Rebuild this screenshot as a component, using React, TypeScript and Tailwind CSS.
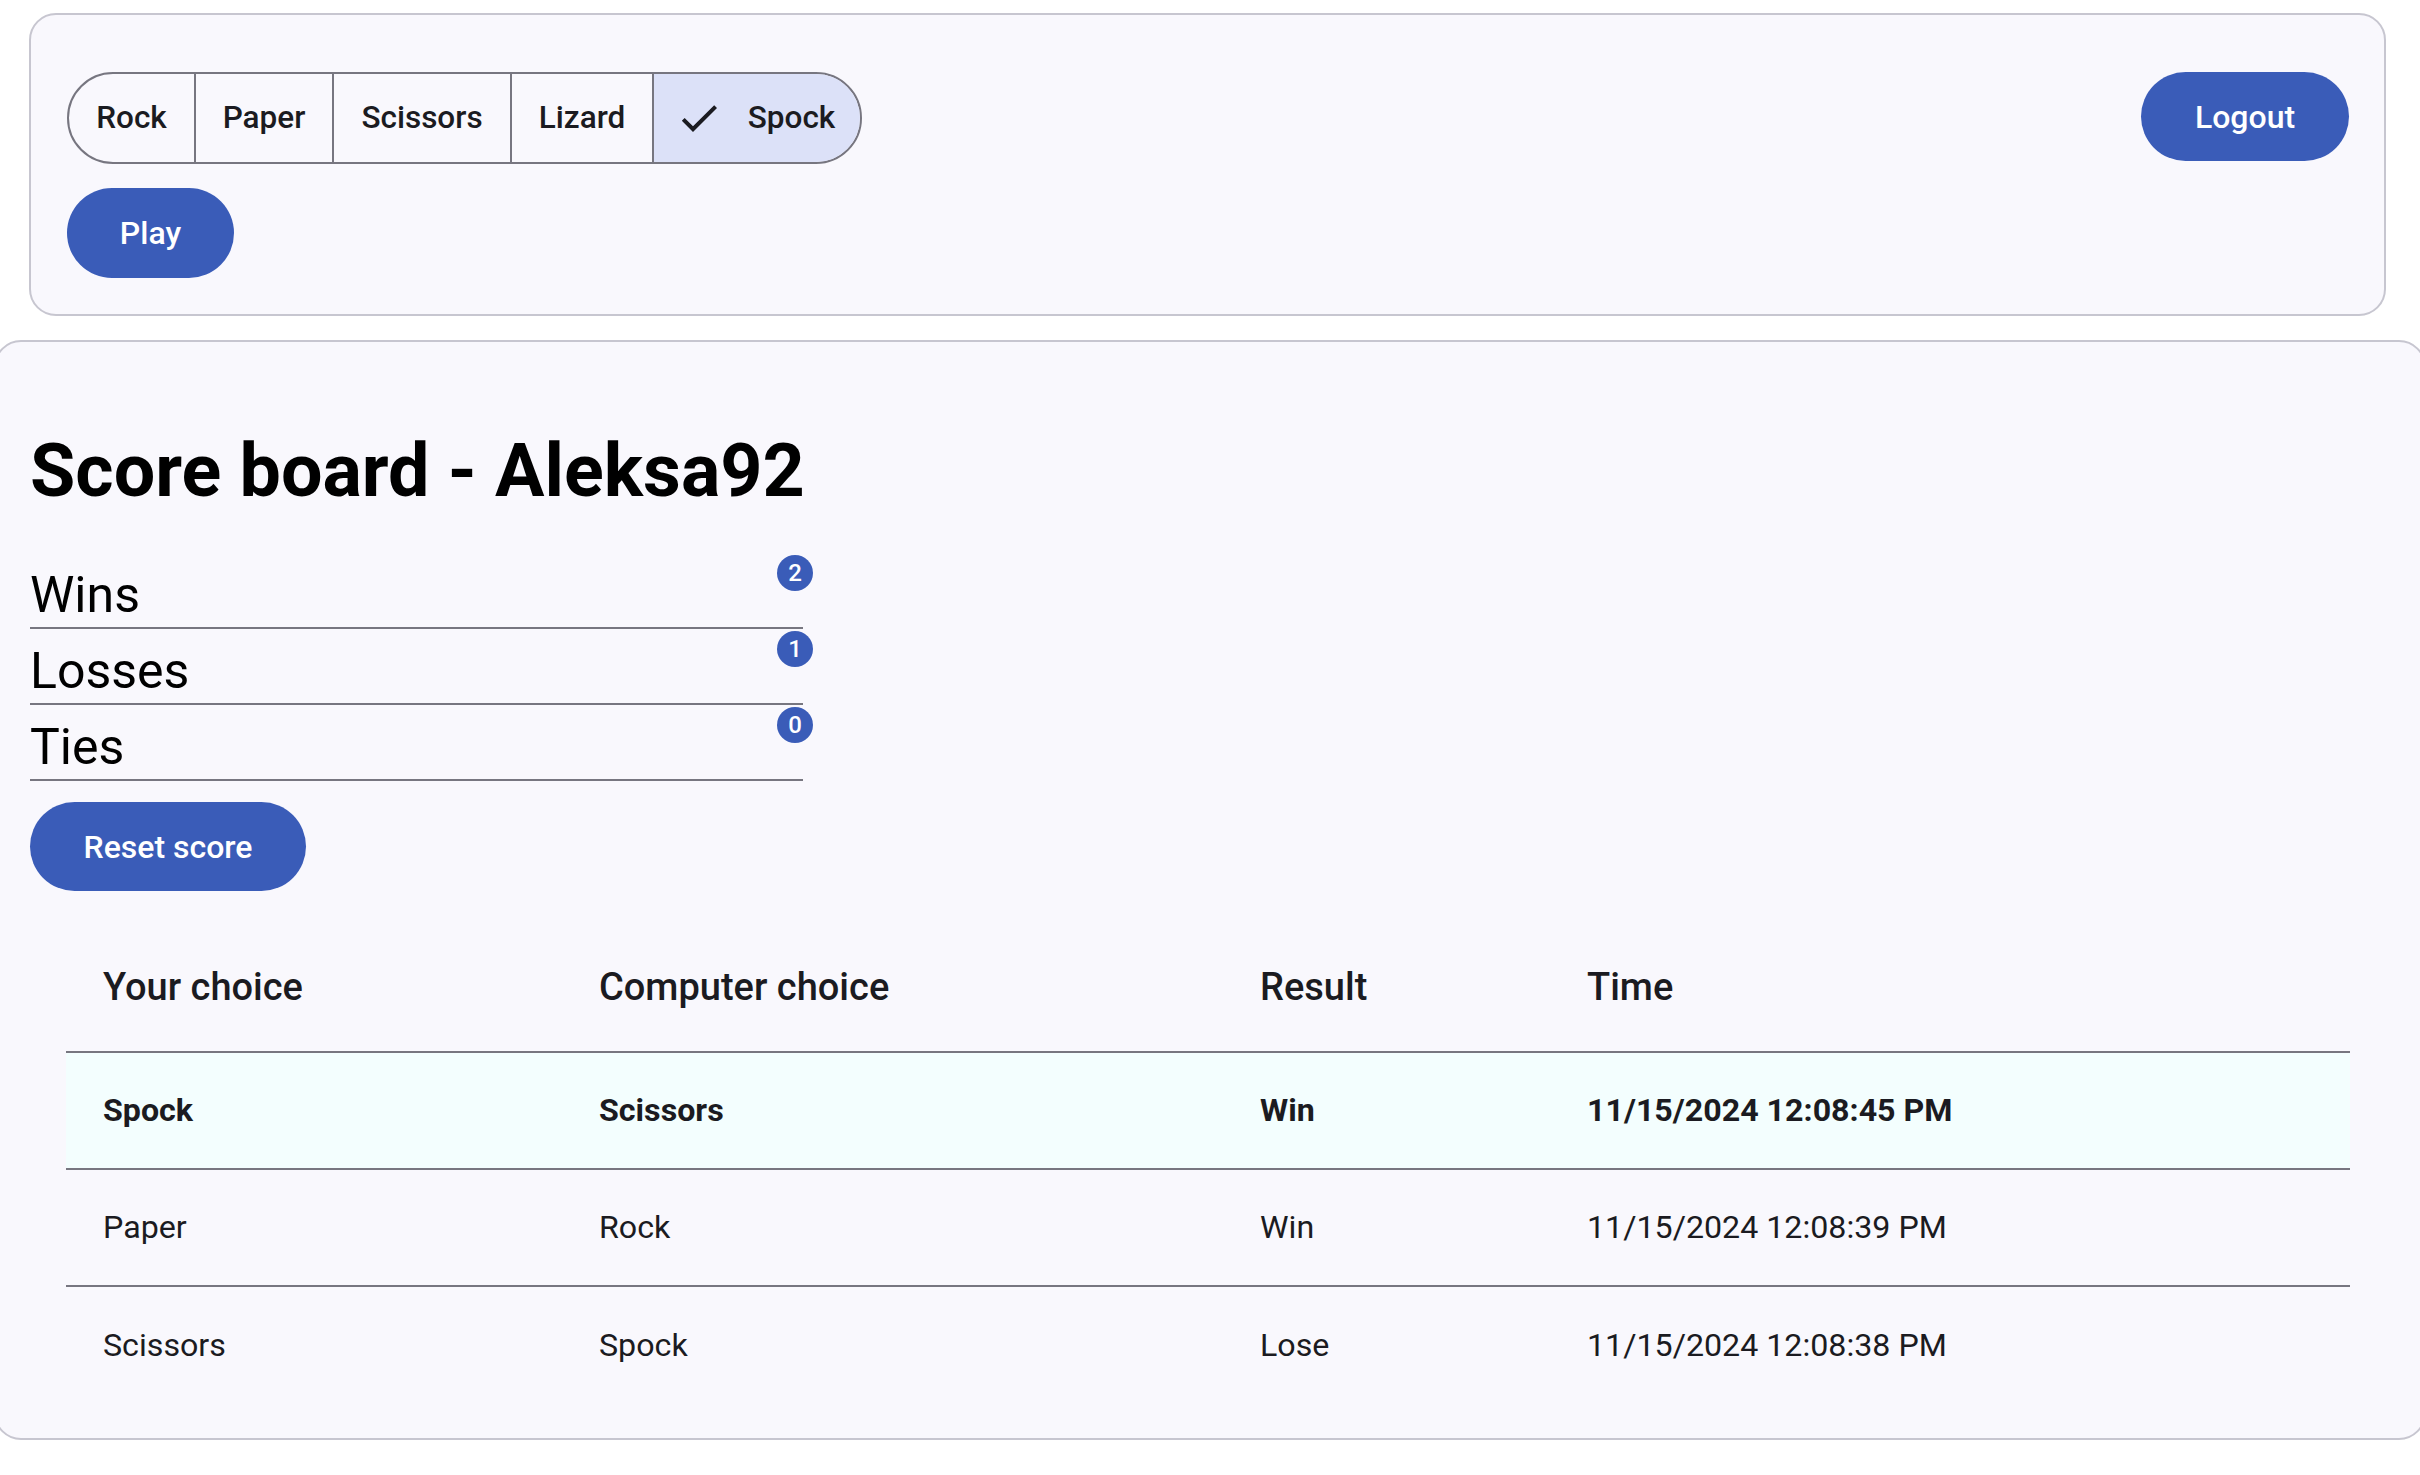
import React, { useState } from "react";
import { MdCheck } from "react-icons/md";
import clsx from "clsx";

const choices = ["Rock", "Paper", "Scissors", "Lizard", "Spock"];
const widths: Record<string, string> = {
  Rock: "w-[125px]",
  Paper: "w-[138px]",
  Scissors: "w-[178px]",
  Lizard: "w-[142px]",
  Spock: "w-[208px]",
};

const history = [
  { you: "Spock", cpu: "Scissors", result: "Win", time: "11/15/2024 12:08:45 PM" },
  { you: "Paper", cpu: "Rock", result: "Win", time: "11/15/2024 12:08:39 PM" },
  { you: "Scissors", cpu: "Spock", result: "Lose", time: "11/15/2024 12:08:38 PM" },
];

const stats = [
  { label: "Wins", value: 2 },
  { label: "Losses", value: 1 },
  { label: "Ties", value: 0 },
];

export default function App() {
  const [selected, setSelected] = useState("Spock");
  return (
    <div className="min-h-screen w-full overflow-hidden bg-white font-['Roboto','Liberation_Sans',sans-serif] text-[#1b1b21]">
      {/* top card */}
      <div className="mt-[13px] ml-[29px] mr-[34px] flex justify-between rounded-[27px] border-2 border-[#c7c6d0] bg-[#f9f8fd] pt-[57px] pr-[35px] pb-[36px] pl-[36px]">
        <div className="flex flex-col items-start gap-[24px]">
          <div className="flex h-[92px] overflow-hidden rounded-full border-2 border-[#777680]">
            {choices.map((c, i) => (
              <button
                key={c}
                onClick={() => setSelected(c)}
                className={clsx(
                  "flex h-full items-center justify-center gap-[25px] text-[31.5px] font-medium",
                  widths[c],
                  i > 0 && "border-l-2 border-[#777680]",
                  selected === c && "bg-[#dce1f8]"
                )}
              >
                {selected === c && <MdCheck className="ml-[-4px] h-[48px] w-[48px]" />}
                {c}
              </button>
            ))}
          </div>
          <button className="h-[90px] w-[167px] rounded-full bg-[#3a5cb8] text-[32px] font-medium text-white">
            Play
          </button>
        </div>
        <button className="h-[89px] w-[208px] rounded-full bg-[#3a5cb8] text-[32px] font-medium text-white">
          Logout
        </button>
      </div>

      {/* score board */}
      <div className="mx-[-6px] mt-[24px] rounded-[27px] border-2 border-[#c7c6d0] bg-[#f9f8fd] px-[34px] pt-[80px] pb-[35px]">
        <h1 className="text-[73.6px] leading-[98px] font-bold text-black">Score board - Aleksa92</h1>
        <div className="mt-[33px] w-[773px]">
          {stats.map((s) => (
            <div
              key={s.label}
              className="relative border-b-2 border-[#777680] pt-[17px] pb-[7px] text-[50px] leading-[50px] text-black"
            >
              {s.label}
              <span className="absolute top-[2px] right-[-10px] flex h-[36px] w-[36px] items-center justify-center rounded-full bg-[#3a5cb8] text-[24px] font-medium text-white">
                {s.value}
              </span>
            </div>
          ))}
        </div>
        <button className="mt-[21px] h-[89px] w-[276px] rounded-full bg-[#3a5cb8] text-[32px] font-medium text-white">
          Reset score
        </button>

        <div className="mt-[33px] ml-[36px] w-[2284px] text-[32.2px]">
          <div className="grid h-[129px] grid-cols-[496px_661px_327px_800px] items-center border-b-2 border-[#777680] text-[38px] font-medium">
            <div className="px-[37px]">Your choice</div>
            <div className="px-[37px]">Computer choice</div>
            <div className="px-[37px]">Result</div>
            <div className="px-[37px]">Time</div>
          </div>
          {history.map((h, i) => (
            <div
              key={h.time}
              className={clsx(
                "grid grid-cols-[496px_661px_327px_800px] items-center",
                i < history.length - 1 ? "h-[117px] border-b-2 border-[#777680]" : "h-[116px]",
                i === 0 && "bg-[#f3fefe] font-bold"
              )}
            >
              <div className="px-[37px]">{h.you}</div>
              <div className="px-[37px]">{h.cpu}</div>
              <div className="px-[37px]">{h.result}</div>
              <div className="px-[37px]">{h.time}</div>
            </div>
          ))}
        </div>
      </div>
    </div>
  );
}
